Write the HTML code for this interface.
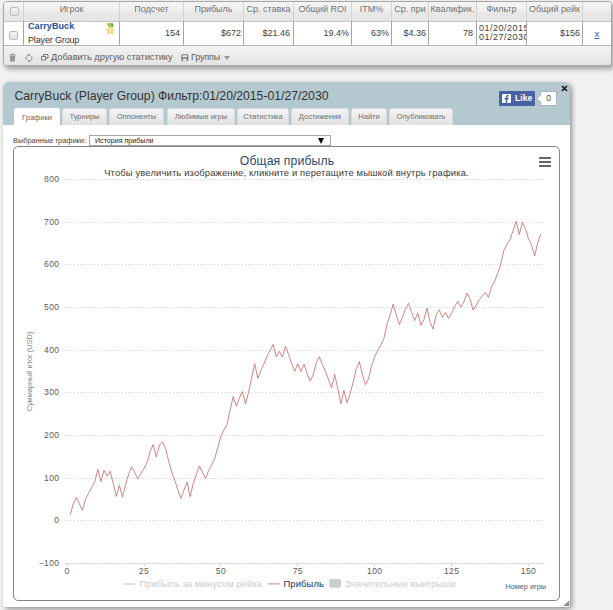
<!DOCTYPE html>
<html>
<head>
<meta charset="utf-8">
<title>Stats</title>
<style>
html,body{margin:0;padding:0;}
body{width:613px;height:610px;overflow:hidden;background:#f1f1f1;font-family:"Liberation Sans",sans-serif;position:relative;color:#333;}
.abs{position:absolute;}
/* ---------- top table ---------- */
#tbl{position:absolute;left:3px;top:1px;width:607px;height:63px;border:1px solid #a9a9a9;border-radius:4px;background:#fff;box-shadow:2px 3px 5px rgba(0,0,0,.35);overflow:hidden;}
#thead{position:absolute;left:0;top:0;width:607px;height:19px;background:linear-gradient(#f4f4f4 0%,#eeeeee 50%,#e8e8e8 52%,#e5e5e5 100%);border-bottom:1px solid #c4c4c4;}
#tfoot{position:absolute;left:0;top:43px;width:607px;height:19px;background:linear-gradient(#f3f3f3,#e3e3e3);border-top:1px solid #b5b5b5;}
.vl{position:absolute;top:0;width:1px;height:43px;background:linear-gradient(#d2d2d2 0,#d2d2d2 19px,#a6a6a6 19px,#a6a6a6 43px);}
.th{position:absolute;top:0;height:19px;line-height:14px;font-size:9px;color:#707070;text-align:center;white-space:nowrap;overflow:hidden;}
.td{position:absolute;top:20px;height:23px;line-height:23px;font-size:9px;color:#404040;text-align:right;white-space:nowrap;overflow:hidden;}
.cb{position:absolute;width:7px;height:7px;border:1px solid #bcbcbc;border-radius:2px;background:linear-gradient(#f4f4f4,#e2e2e2);}
/* ---------- panel ---------- */
#panel{position:absolute;left:3px;top:82px;width:567px;height:525px;background:#b4c8d0;border-radius:6px 6px 2px 2px;box-shadow:2px 2px 5px rgba(0,0,0,.4);}
#pbody{position:absolute;left:0;top:43px;width:567px;height:482px;background:#fff;border-radius:0 0 2px 2px;}
#ptitle{position:absolute;left:11.5px;top:6px;font-size:12.2px;color:#333;white-space:nowrap;line-height:16px;}
.tab{position:absolute;top:26px;height:17px;line-height:16.5px;font-size:7.5px;color:#707070;text-align:center;background:linear-gradient(#f4f4f4,#e2e2e2);border:1px solid #d9dcdd;border-bottom:none;border-radius:3px 3px 0 0;box-sizing:border-box;white-space:nowrap;}
.tab.on{top:26px;height:18px;background:#fff;border-color:#fff;color:#666;line-height:17.5px;}
#chart{position:absolute;left:13px;top:146px;width:545px;height:453px;border:1px solid #858585;border-radius:5px;background:#fff;box-sizing:content-box;}
</style>
</head>
<body>

<div id="tbl">
  <div id="thead"></div>
  <div id="tfoot"></div>
  <div class="vl" style="left:19px"></div>
  <div class="vl" style="left:115px"></div>
  <div class="vl" style="left:179px"></div>
  <div class="vl" style="left:239px"></div>
  <div class="vl" style="left:289px"></div>
  <div class="vl" style="left:347px"></div>
  <div class="vl" style="left:387px"></div>
  <div class="vl" style="left:424px"></div>
  <div class="vl" style="left:472px"></div>
  <div class="vl" style="left:522px"></div>
  <div class="vl" style="left:578px"></div>

  <div class="cb" style="left:6px;top:5px"></div>
  <div class="cb" style="left:5px;top:29px"></div>

  <div class="th" style="left:20px;width:95px">Игрок</div>
  <div class="th" style="left:116px;width:63px">Подсчет</div>
  <div class="th" style="left:180px;width:59px">Прибыль</div>
  <div class="th" style="left:240px;width:49px">Ср. ставка</div>
  <div class="th" style="left:290px;width:57px">Общий ROI</div>
  <div class="th" style="left:348px;width:39px">ITM%</div>
  <div class="th" style="left:388px;width:36px">Ср. при</div>
  <div class="th" style="left:425px;width:47px">Квалифик.</div>
  <div class="th" style="left:473px;width:49px">Фильтр</div>
  <div class="th" style="left:523px;width:55px">Общий рейк</div>

  <div class="td" style="left:116px;width:60px">154</div>
  <div class="td" style="left:180px;width:57px">$672</div>
  <div class="td" style="left:240px;width:46px">$21.46</div>
  <div class="td" style="left:290px;width:55px">19.4%</div>
  <div class="td" style="left:348px;width:37px">63%</div>
  <div class="td" style="left:388px;width:34px">$4.36</div>
  <div class="td" style="left:425px;width:44px">78</div>
  <div class="td" style="left:523px;width:53px">$156</div>

  <div class="abs" style="left:24px;top:17.8px;font-size:9px;font-weight:bold;color:#1d4f9f;line-height:12px;white-space:nowrap;letter-spacing:0.08px">CarryBuck</div>
  <div class="abs" style="left:24px;top:31.8px;font-size:9px;color:#333;line-height:12px;white-space:nowrap;letter-spacing:-0.15px">Player Group</div>
  <svg class="abs" style="left:100px;top:20px" width="14" height="14" viewBox="0 0 14 14">
    <defs><linearGradient id="gr" x1="0" y1="0" x2="0" y2="1"><stop offset="0" stop-color="#8cc63f"/><stop offset="1" stop-color="#4e9a06"/></linearGradient>
    <radialGradient id="st" cx="0.5" cy="0.4" r="0.6"><stop offset="0" stop-color="#fff6c0"/><stop offset="1" stop-color="#f7d467"/></radialGradient></defs>
    <path d="M3.3 1.3h5.7v4.3l-1.2-0.7h-3.3z" fill="#62a821"/><path d="M4.8 1.3h2.7v3.6h-2.7z" fill="#9bd44e"/>
    <path d="M6.1 4.2l1.25 2.6 2.85 0.4-2.05 2 0.5 2.85-2.55-1.35-2.55 1.35 0.5-2.85-2.05-2 2.85-0.4z" fill="url(#st)" stroke="#ecbd4e" stroke-width="0.6" stroke-linejoin="round"/>
  </svg>
  <div class="abs" style="left:475px;top:20px;width:47px;height:24px;overflow:hidden;font-size:9px;line-height:8.7px;color:#404040;white-space:nowrap;letter-spacing:0.5px"><div style="margin-top:2.2px">01/20/2015</div><div>01/27/2030</div></div>
  <div class="abs" style="left:590.5px;top:26px;font-size:9.5px;color:#2a55b5;text-decoration:underline;line-height:12px">x</div>

  <!-- footer icons -->
  <svg class="abs" style="left:4px;top:50px" width="10" height="11" viewBox="0 0 10 11">
    <path d="M1.2 2.6h6.6v1H1.2zM3.3 1.6h2.4v1H3.3zM1.8 4h5.4l-0.4 5.4H2.2z" fill="#969696"/>
  </svg>
  <svg class="abs" style="left:20.5px;top:50.5px" width="9" height="10" viewBox="0 0 10 11">
    <path d="M4.6 2.2A3.1 3.1 0 0 0 2 7.4" fill="none" stroke="#8f8f8f" stroke-width="1.1"/>
    <path d="M4.4 8.8A3.1 3.1 0 0 0 7 3.6" fill="none" stroke="#8f8f8f" stroke-width="1.1"/>
    <path d="M4.2 0.6l1.8 1.6-1.8 1.6zM4.8 7.2l-1.8 1.6 1.8 1.6z" fill="#8a8a8a"/>
  </svg>
  <svg class="abs" style="left:36px;top:51px" width="10" height="9" viewBox="0 0 10 9">
    <path d="M3.5 1.5h4.5v3.5h-4.5z" fill="none" stroke="#777" stroke-width="1"/>
    <path d="M1.5 3.5h4v3.5h-4z" fill="#efefef" stroke="#777" stroke-width="1"/>
  </svg>
  <div class="abs" style="left:47px;top:49px;font-size:9.2px;color:#606060;line-height:12px;white-space:nowrap;letter-spacing:0.02px">Добавить другую статистику</div>
  <svg class="abs" style="left:177px;top:52px" width="8" height="8" viewBox="0 0 8 8">
    <rect x="0.3" y="0.3" width="7" height="7" rx="1.2" fill="#7d7d7d"/>
    <rect x="1.6" y="1.2" width="4.4" height="2" fill="#e8e8e8"/>
    <rect x="2" y="4.8" width="3.6" height="2.4" fill="#e8e8e8"/>
  </svg>
  <div class="abs" style="left:187px;top:49px;font-size:9px;color:#606060;line-height:12px;white-space:nowrap;letter-spacing:-0.15px">Группы</div>
  <div class="abs" style="left:220px;top:54px;width:0;height:0;border-left:3px solid transparent;border-right:3px solid transparent;border-top:4px solid #999"></div>
</div>

<div id="panel">
  <div id="ptitle">CarryBuck (Player Group) Фильтр:01/20/2015-01/27/2030</div>
  <div id="pbody"></div>

  <div class="tab on" style="left:11px;width:46px">Графики</div>
  <div class="tab" style="left:59px;width:45px">Турниры</div>
  <div class="tab" style="left:106px;width:55px">Оппоненты</div>
  <div class="tab" style="left:164px;width:68px">Любимые игры</div>
  <div class="tab" style="left:234px;width:52px">Статистика</div>
  <div class="tab" style="left:288px;width:58px">Достижения</div>
  <div class="tab" style="left:348px;width:36px">Найти</div>
  <div class="tab" style="left:386px;width:64px">Опубликовать</div>
  <!-- fb like -->
  <div class="abs" style="left:496px;top:9px;width:36px;height:15px;background:#4a62a3;border-radius:1px"></div>
  <div class="abs" style="left:499px;top:12px;width:9px;height:9px;background:#fff;border-radius:1px"></div>
  <svg class="abs" style="left:499px;top:12px" width="9" height="9" viewBox="0 0 9 9"><path d="M5.2 9V5.4h1.3l0.2-1.4H5.2V3.1c0-0.4 0.1-0.7 0.7-0.7h0.8V1.1C6.5 1.1 6.1 1 5.6 1 4.5 1 3.8 1.7 3.8 2.9V4H2.6v1.4h1.2V9z" fill="#4a62a3"/></svg>
  <div class="abs" style="left:512px;top:10px;font-size:8.6px;font-weight:bold;color:#fff;line-height:13px;letter-spacing:0px">Like</div>
  <div class="abs" style="left:537px;top:9px;width:15px;height:13px;background:#fff;border:1px solid #a9b3c6;"></div>
  <div class="abs" style="left:534px;top:14px;width:4px;height:4px;background:#fff;border-left:1px solid #a9b3c6;border-bottom:1px solid #a9b3c6;transform:rotate(45deg);"></div>
  <div class="abs" style="left:538px;top:10px;width:15px;text-align:center;font-size:8.5px;color:#444;line-height:13px">0</div>
  <svg class="abs" style="left:558px;top:3px" width="7" height="7" viewBox="0 0 7 7"><path d="M1 1l5 5M6 1l-5 5" stroke="#1a1a1a" stroke-width="1.7"/></svg>
</div>

<div id="chart"></div>

<div class="abs" style="left:13px;top:135px;font-size:7.42px;color:#444;line-height:11px;white-space:nowrap;">Выбранные графики:</div>
<div class="abs" style="left:89px;top:135px;width:240px;height:9px;border:1px solid #a5a5a5;background:#fff;"></div>
<div class="abs" style="left:95px;top:136px;font-size:7.1px;color:#222;line-height:11px;white-space:nowrap;">История прибыли</div>
<div class="abs" style="left:318px;top:138px;width:0;height:0;border-left:3px solid transparent;border-right:3px solid transparent;border-top:6px solid #000"></div>
<svg class="abs" style="left:0;top:0" width="613" height="610" viewBox="0 0 613 610">
<style>.al{font-family:"Liberation Sans",sans-serif;font-size:8.6px;fill:#5c5c5c;letter-spacing:0.35px}</style>
<path d="M65 179.5H544.5" stroke="#d8d8d8" stroke-width="1" stroke-dasharray="1.3 1.7" fill="none"/>
<path d="M65 222.5H544.5" stroke="#d8d8d8" stroke-width="1" stroke-dasharray="1.3 1.7" fill="none"/>
<path d="M65 264.5H544.5" stroke="#d8d8d8" stroke-width="1" stroke-dasharray="1.3 1.7" fill="none"/>
<path d="M65 307.5H544.5" stroke="#d8d8d8" stroke-width="1" stroke-dasharray="1.3 1.7" fill="none"/>
<path d="M65 350.5H544.5" stroke="#d8d8d8" stroke-width="1" stroke-dasharray="1.3 1.7" fill="none"/>
<path d="M65 392.5H544.5" stroke="#d8d8d8" stroke-width="1" stroke-dasharray="1.3 1.7" fill="none"/>
<path d="M65 435.5H544.5" stroke="#d8d8d8" stroke-width="1" stroke-dasharray="1.3 1.7" fill="none"/>
<path d="M65 478.5H544.5" stroke="#d8d8d8" stroke-width="1" stroke-dasharray="1.3 1.7" fill="none"/>
<path d="M65 520.5H544.5" stroke="#d8d8d8" stroke-width="1" stroke-dasharray="1.3 1.7" fill="none"/>

<path d="M65 563.5H545" stroke="#e3e8ee" stroke-width="1"/><path d="M65 563.5H545" stroke="#c9ced6" stroke-width="1" stroke-dasharray="1.3 1.7"/>
<path d="M67.5 564V566" stroke="#c0d0e0" stroke-width="1"/>
<path d="M144.5 564V566" stroke="#c0d0e0" stroke-width="1"/>
<path d="M220.5 564V566" stroke="#c0d0e0" stroke-width="1"/>
<path d="M297.5 564V566" stroke="#c0d0e0" stroke-width="1"/>
<path d="M374.5 564V566" stroke="#c0d0e0" stroke-width="1"/>
<path d="M451.5 564V566" stroke="#c0d0e0" stroke-width="1"/>
<path d="M528.5 564V566" stroke="#c0d0e0" stroke-width="1"/>

<text x="59.5" y="182.1" text-anchor="end" class="al">800</text>
<text x="59.5" y="225.1" text-anchor="end" class="al">700</text>
<text x="59.5" y="267.1" text-anchor="end" class="al">600</text>
<text x="59.5" y="310.1" text-anchor="end" class="al">500</text>
<text x="59.5" y="353.1" text-anchor="end" class="al">400</text>
<text x="59.5" y="395.1" text-anchor="end" class="al">300</text>
<text x="59.5" y="438.1" text-anchor="end" class="al">200</text>
<text x="59.5" y="481.1" text-anchor="end" class="al">100</text>
<text x="59.5" y="523.1" text-anchor="end" class="al">0</text>
<text x="59.5" y="566.1" text-anchor="end" class="al">−100</text>

<text x="67.1" y="574.3" text-anchor="middle" class="al">0</text>
<text x="144.0" y="574.3" text-anchor="middle" class="al">25</text>
<text x="220.9" y="574.3" text-anchor="middle" class="al">50</text>
<text x="297.8" y="574.3" text-anchor="middle" class="al">75</text>
<text x="374.7" y="574.3" text-anchor="middle" class="al">100</text>
<text x="451.6" y="574.3" text-anchor="middle" class="al">125</text>
<text x="528.5" y="574.3" text-anchor="middle" class="al">150</text>

<text x="287" y="164.5" text-anchor="middle" style="font-family:'Liberation Sans',sans-serif;font-size:12.2px;fill:#274b6d;letter-spacing:0.13px">Общая прибыль</text>
<text x="286.5" y="175.6" text-anchor="middle" style="font-family:'Liberation Sans',sans-serif;font-size:9.4px;fill:#3a3a3a;letter-spacing:0.16px">Чтобы увеличить изображение, кликните и перетащите мышкой внутрь графика.</text>
<g fill="#666"><rect x="539" y="157" width="12" height="2" rx="0.5"/><rect x="539" y="161" width="12" height="2" rx="0.5"/><rect x="539" y="165" width="12" height="2" rx="0.5"/></g>
<text transform="translate(31.6,371.5) rotate(-90)" text-anchor="middle" style="font-family:'Liberation Sans',sans-serif;font-size:7.4px;fill:#858585">Суммарный итог (USD)</text>
<text x="546" y="589.3" text-anchor="end" style="font-family:'Liberation Sans',sans-serif;font-size:7.3px;fill:#45607a">Номер игры</text>
<path d="M70.2 514.9 L73.3 503.8 L76.3 497.5 L79.4 503.8 L82.5 510.3 L85.6 498.9 L88.6 493.1 L91.7 487.4 L94.8 481.6 L97.9 469.3 L100.9 481.6 L104.0 470.2 L107.1 476.2 L110.2 471.3 L113.2 483.3 L116.3 496.4 L119.4 485.4 L122.5 497.2 L125.5 484.9 L128.6 474.3 L131.7 466.7 L134.8 472.6 L137.8 478.9 L140.9 473.4 L144.0 468.3 L147.1 462.5 L150.2 451.1 L153.2 444.6 L156.3 457.0 L159.4 445.1 L162.5 441.8 L165.5 448.4 L168.6 460.7 L171.7 472.1 L174.8 480.3 L177.8 489.8 L180.9 498.4 L184.0 489.8 L187.1 482.0 L190.1 496.7 L193.2 483.6 L196.3 474.6 L199.4 465.9 L202.4 472.1 L205.5 478.4 L208.6 470.8 L211.7 464.8 L214.7 458.7 L217.8 447.5 L220.9 436.1 L224.0 429.8 L227.1 424.3 L230.1 410.3 L233.2 396.4 L236.3 406.2 L239.4 398.0 L242.4 391.5 L245.5 404.1 L248.6 392.3 L251.7 377.5 L254.7 363.6 L257.8 378.4 L260.9 370.2 L264.0 363.6 L267.0 356.2 L270.1 350.5 L273.2 344.4 L276.3 357.0 L279.3 351.3 L282.4 357.0 L285.5 346.1 L288.6 354.6 L291.6 363.6 L294.7 371.3 L297.8 363.9 L300.9 371.6 L304.0 364.4 L307.0 373.1 L310.1 381.0 L313.2 374.8 L316.3 362.5 L319.3 356.7 L322.4 364.9 L325.5 371.5 L328.6 379.7 L331.6 387.9 L334.7 374.4 L337.8 388.7 L340.9 403.8 L343.9 390.3 L347.0 402.6 L350.1 393.6 L353.2 382.1 L356.2 369.0 L359.3 361.6 L362.4 374.8 L365.5 384.6 L368.5 378.9 L371.6 365.7 L374.7 356.7 L377.8 350.2 L380.9 344.8 L383.9 338.5 L387.0 324.6 L390.1 314.8 L393.2 304.1 L396.2 314.4 L399.3 324.6 L402.4 317.2 L405.5 309.0 L408.5 303.3 L411.6 312.3 L414.7 320.5 L417.8 312.8 L420.8 325.1 L423.9 319.7 L427.0 308.2 L430.1 322.1 L433.1 329.2 L436.2 314.8 L439.3 309.8 L442.4 317.5 L445.4 312.3 L448.5 318.4 L451.6 313.1 L454.7 306.6 L457.8 301.3 L460.8 307.2 L463.9 301.8 L467.0 293.1 L470.1 299.3 L473.1 310.0 L476.2 305.1 L479.3 299.8 L482.4 296.1 L485.4 292.5 L488.5 297.4 L491.6 286.2 L494.7 281.3 L497.7 273.1 L500.8 264.1 L503.9 250.2 L507.0 244.4 L510.0 239.5 L513.1 230.5 L516.2 221.5 L519.3 234.6 L522.3 222.3 L525.4 228.9 L528.5 238.7 L531.6 245.2 L534.7 255.9 L537.7 242.8 L540.8 234.1" fill="none" stroke="#c96f6f" stroke-opacity="0.85" stroke-width="1" stroke-linejoin="round"/>
<path d="M123 584H135" stroke="#d8d8d8" stroke-width="1.5"/>
<text x="139.5" y="587" style="font-family:'Liberation Sans',sans-serif;font-size:9.4px;fill:#ccc;letter-spacing:0.11px">Прибыль за минусом рейка</text>
<path d="M267.7 583.8H279.8" stroke="#e2b4b4" stroke-width="1.7"/>
<text x="283.5" y="587" style="font-family:'Liberation Sans',sans-serif;font-size:9.4px;fill:#274b6d;stroke:#274b6d;stroke-width:0.1;letter-spacing:0.13px">Прибыль</text>
<rect x="329.2" y="579" width="11.8" height="8.8" rx="2" fill="#ccc"/>
<text x="345" y="587" style="font-family:'Liberation Sans',sans-serif;font-size:9.4px;fill:#ccc;letter-spacing:0.03px">Значительные выигрыши</text>
<path d="M569.3 600.3V606H563.3z" fill="#8a8a8a"/>
</svg>


</body>
</html>
